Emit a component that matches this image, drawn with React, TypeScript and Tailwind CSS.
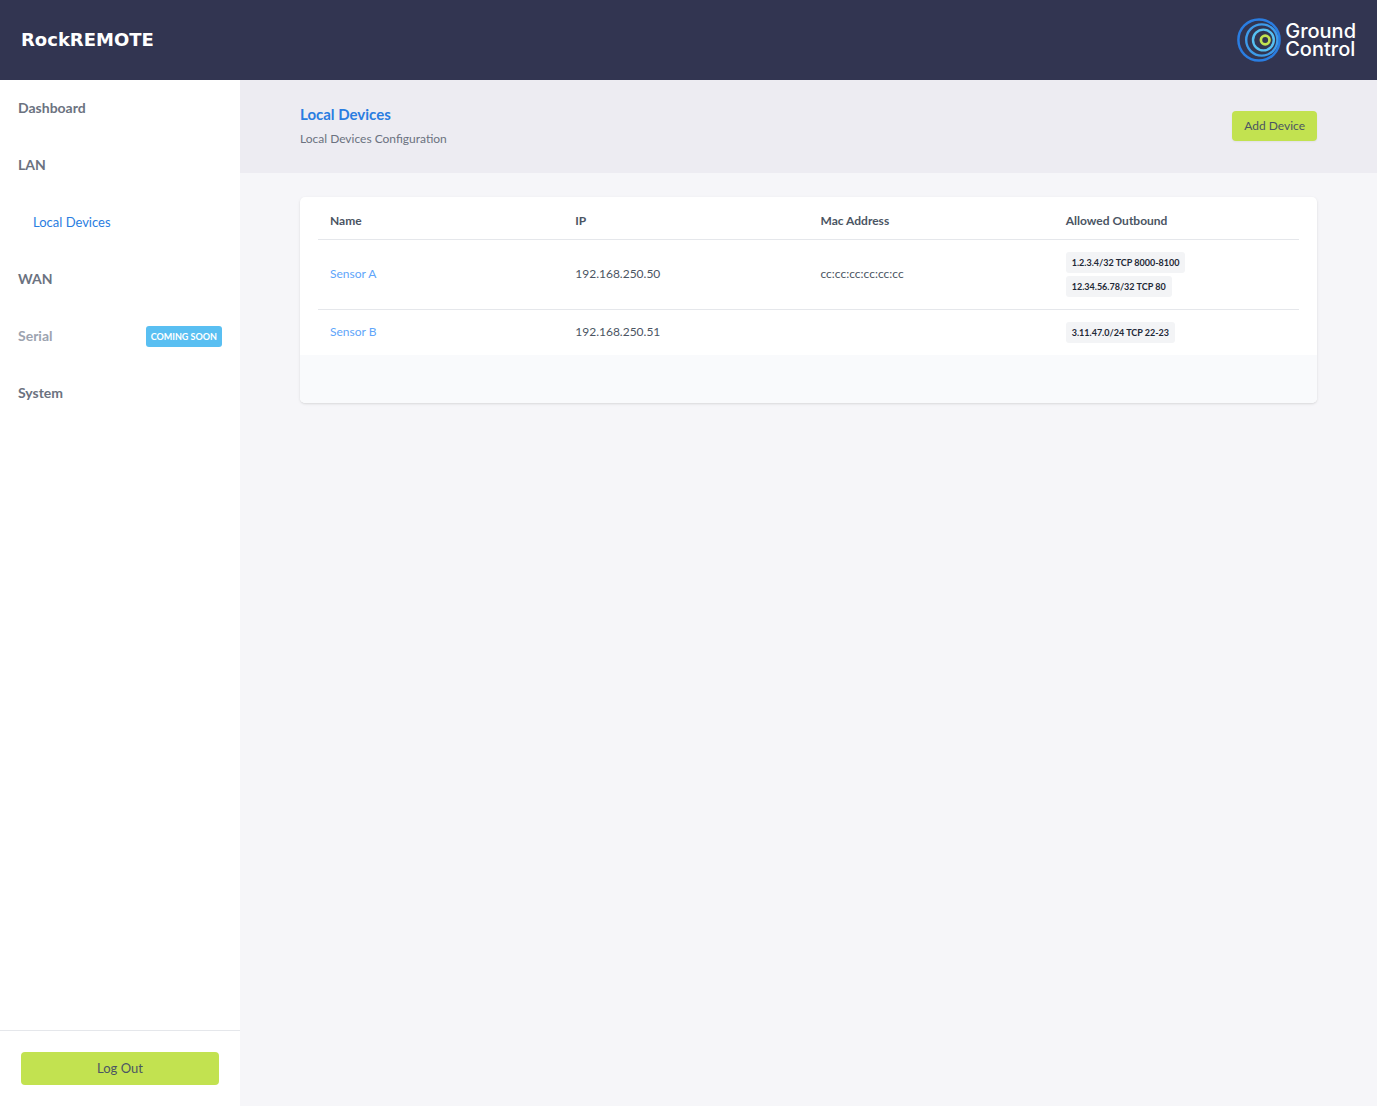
import type { ReactNode } from "react";

type Rule = { network: string; ports: string };
type Device = { name: string; ip: string; mac: string; outbound: Rule[] };

const devices: Device[] = [
  {
    name: "Sensor A",
    ip: "192.168.250.50",
    mac: "cc:cc:cc:cc:cc:cc",
    outbound: [
      { network: "1.2.3.4/32", ports: "TCP 8000-8100" },
      { network: "12.34.56.78/32", ports: "TCP 80" },
    ],
  },
  {
    name: "Sensor B",
    ip: "192.168.250.51",
    mac: "",
    outbound: [{ network: "3.11.47.0/24", ports: "TCP 22-23" }],
  },
];

function Logo() {
  return (
    <a href="#" className="flex items-center gap-1">
      <svg width="44" height="44" viewBox="0 0 44 44" fill="none" aria-hidden="true">
        <circle cx="22" cy="22" r="20.6" stroke="#2a7de1" strokeWidth="2.5" />
        <circle cx="24.8" cy="22" r="15.6" stroke="#3d9be9" strokeWidth="2.4" />
        <circle cx="26.4" cy="22" r="10.4" stroke="#56c0f2" strokeWidth="2.4" />
        <circle cx="28.2" cy="22" r="4.3" stroke="#c2e250" strokeWidth="2.7" />
      </svg>
      <span className="w-min font-[Inter,sans-serif] text-[20px] leading-[18px] font-medium text-white">
        Ground Control
      </span>
    </a>
  );
}

function NavItem({ children, className }: { children: ReactNode; className: string }) {
  return (
    <a href="#" className={`flex h-[57px] items-center justify-between pr-[18px] pb-px leading-5 ${className}`}>
      {children}
    </a>
  );
}

export default function App() {
  return (
    <div className="flex min-h-screen flex-col bg-[#f6f6f9] font-[Lato,sans-serif] text-gray-600">
      {/* HEADER */}
      <header className="flex h-20 items-center justify-between bg-[#323551] px-[21px]">
        <span className="font-['DejaVu_Sans',sans-serif] text-lg font-bold text-white">RockREMOTE</span>
        <Logo />
      </header>

      <div className="flex flex-1">
        {/* SIDEBAR */}
        <aside className="flex w-60 shrink-0 flex-col justify-between bg-white">
          <nav>
            <NavItem className="pl-[18px] text-[14px] font-bold text-[#6b7280]">Dashboard</NavItem>
            <NavItem className="pl-[18px] text-[14px] font-bold text-[#6b7280]">LAN</NavItem>
            <NavItem className="pl-[33px] text-[13px] text-[#2a7de1]">Local Devices</NavItem>
            <NavItem className="pl-[18px] text-[14px] font-bold text-[#6b7280]">WAN</NavItem>
            <NavItem className="pl-[18px] text-[14px] font-bold text-[#9ca3af]">
              Serial
              <span className="rounded-[3px] bg-[#59bff2] px-[5px] text-[9px] leading-[21px] text-white">
                COMING SOON
              </span>
            </NavItem>
            <NavItem className="pl-[18px] text-[14px] font-bold text-[#6b7280]">System</NavItem>
          </nav>
          <div className="border-t border-[#e5e7eb] p-[21px]">
            <button className="h-[33px] w-full rounded-[4px] bg-[#c2e250] text-[13px] leading-[19px] text-[#4b5563]">
              Log Out
            </button>
          </div>
        </aside>

        <main className="min-w-0 flex-1">
          {/* PAGE TITLE */}
          <section className="flex h-[93px] items-center justify-between bg-[#edecf2] px-[60px] pb-px">
            <div className="flex flex-col gap-px pt-px">
              <h1 className="text-[15px] leading-6 font-bold text-[#2a7de1]">Local Devices</h1>
              <p className="text-xs leading-6 text-[#6b7280]">Local Devices Configuration</p>
            </div>
            <button className="h-[30px] rounded-[4px] bg-[#c2e250] px-3 text-xs text-[#4b5563] shadow-xs">
              Add Device
            </button>
          </section>

          {/* DEVICES */}
          <section className="mx-[60px] mt-6 overflow-hidden rounded-[5px] bg-white shadow">
            <div className="px-[18px] pt-[6px]">
              <table className="w-full table-fixed text-left text-xs text-[#4b5563]">
                <thead>
                  <tr className="h-9">
                    <th className="px-3 font-bold">Name</th>
                    <th className="px-3 font-bold">IP</th>
                    <th className="px-3 font-bold">Mac Address</th>
                    <th className="px-3 font-bold">Allowed Outbound</th>
                  </tr>
                </thead>
                <tbody>
                  {devices.map((device) => (
                    <tr key={device.name} className="border-t border-[#e5e7eb]">
                      <td className="px-3">
                        <a href="#" className="text-[#60a5fa]">{device.name}</a>
                      </td>
                      <td className="px-3">{device.ip}</td>
                      <td className="px-3">{device.mac}</td>
                      <td className="p-3">
                        <div className="flex flex-col items-start gap-[3px]">
                          {device.outbound.map((rule) => (
                            <span
                              key={rule.network}
                              className="flex gap-[2px] rounded-[3px] bg-[#f3f4f6] px-[6px] text-[9px] leading-[21px] font-bold text-[#1f2937]"
                            >
                              <span>{rule.network}</span>
                              <span>{rule.ports}</span>
                            </span>
                          ))}
                        </div>
                      </td>
                    </tr>
                  ))}
                </tbody>
              </table>
            </div>
            <div className="h-12 bg-[#f9fafc]" />
          </section>
        </main>
      </div>
    </div>
  );
}
